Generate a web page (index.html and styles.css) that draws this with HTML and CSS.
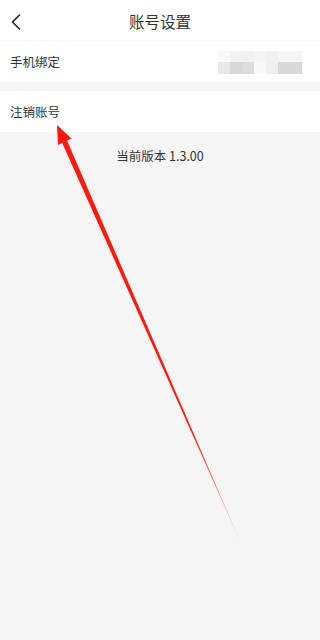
FILE: index.html
```html
<!DOCTYPE html>
<html lang="zh">
<head>
<meta charset="utf-8">
<title>账号设置</title>
<link rel="stylesheet" href="styles.css">
</head>
<body>
<div class="app">
  <header class="topbar">
    <span class="back">
      <svg width="10" height="16" viewBox="0 0 10 16"><path d="M8.5 1 L1.5 8 L8.5 15" fill="none" stroke="#222" stroke-width="1.6" stroke-linecap="round" stroke-linejoin="round"/></svg>
    </span>
    <h1 class="title">账号设置</h1>
  </header>
  <section class="group">
    <div class="row">
      <span class="label">手机绑定</span>
      <div class="mosaic">
        <i class="m l1"></i><i class="m l2"></i><i class="m l3"></i><i class="m l4"></i><i class="m l5"></i><i class="m l6"></i><i class="m l6"></i>
        <i class="m d1"></i><i class="m d2"></i><i class="m d3"></i><i class="m d4"></i><i class="m d5"></i><i class="m d6"></i><i class="m d6"></i>
      </div>
    </div>
  </section>
  <section class="group">
    <div class="row">
      <span class="label">注销账号</span>
    </div>
  </section>
  <p class="version">当前版本 1.3.00</p>
  <svg class="annot" width="306" height="640" viewBox="0 0 306 640">
    <defs>
      <linearGradient id="fade" gradientUnits="userSpaceOnUse" x1="57" y1="125" x2="244" y2="550">
        <stop offset="0" stop-color="#ff1b0c" stop-opacity="1"/>
        <stop offset="0.72" stop-color="#ff1b0c" stop-opacity="1"/>
        <stop offset="1" stop-color="#ff1b0c" stop-opacity="0.05"/>
      </linearGradient>
    </defs>
    <polygon points="57,125 71.5,138.5 58,145" fill="#ff1b0c"/>
    <polygon points="67,140.5 244,550 62,142.5" fill="url(#fade)"/>
  </svg>
</div>
</body>
</html>
```
FILE: styles.css
```css
* { box-sizing: border-box; }
html, body { margin: 0; padding: 0; }
body {
  background: #f5f5f5;
  font-family: "Noto Sans CJK SC", "Noto Sans", sans-serif;
  color: #333;
}
.app {
  position: relative;
  width: 100%;
  min-height: 640px;
  background: #f5f5f5;
}
.topbar {
  height: 41px;
  background: #fff;
  border-bottom: 1px solid #f4f4f4;
  display: flex;
  align-items: center;
  justify-content: center;
  position: relative;
}
.back {
  position: absolute;
  left: 11px;
  top: 14px;
  display: flex;
}
.title {
  margin: 0;
  font-size: 15.5px;
  font-weight: 400;
  color: #333;
  line-height: 1;
  margin-top: 3px;
}
.group {
  background: #fff;
  margin-bottom: 9px;
}
.row {
  height: 41px;
  display: flex;
  align-items: center;
  justify-content: space-between;
  padding: 0 10px;
}
.label {
  font-size: 12.5px;
  color: #333;
}
.mosaic {
  display: grid;
  grid-template-columns: repeat(7, 12px);
  grid-template-rows: 11px 12px;
  margin-right: 8px;
  margin-top: 1px;
}
.m { display: block; }
.l1 { background: #f9f9f9; }
.l2 { background: #f3f3f3; }
.l3 { background: #f1f1f1; }
.l4 { background: #f4f4f4; }
.l5 { background: #f1f1f1; }
.l6 { background: #f5f5f5; }
.d1 { background: #e8e8e8; }
.d2 { background: #d7d7d7; }
.d3 { background: #dcdcdc; }
.d4 { background: #f8f8f8; }
.d5 { background: #efefef; }
.d6 { background: #d9d9d9; }
.version {
  margin: 14px 0 0;
  text-align: center;
  font-size: 12.5px;
  color: #333;
}
.annot {
  position: absolute;
  left: 0;
  top: 0;
  pointer-events: none;
}
```
